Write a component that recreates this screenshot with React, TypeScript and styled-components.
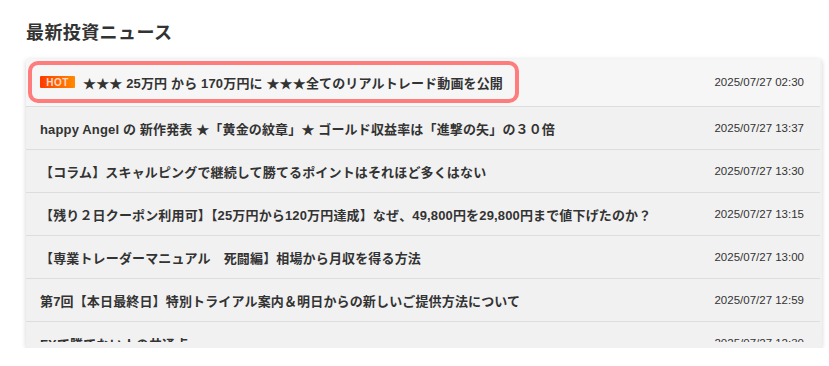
import React from "react";
import styled, { createGlobalStyle } from "styled-components";

const GlobalStyle = createGlobalStyle`
  html, body {
    margin: 0;
    padding: 0;
    background: #ffffff;
  }
  body {
    font-family: "Liberation Sans", "Noto Sans CJK JP", Arial, sans-serif;
    color: #333;
  }
  * { box-sizing: border-box; }
`;

const Page = styled.div`
  padding: 22px 8px 0 26px;
  width: 829px;
`;

const Heading = styled.h2`
  margin: 0 0 15px 0;
  font-size: 18px;
  line-height: 22px;
  font-weight: 700;
  color: #333;
  letter-spacing: 0.4px;
`;

const Panel = styled.div`
  width: 796px;
  padding: 0 2px 6px 0;
  background: #f1f1f1;
  border-radius: 4px;
  box-shadow: 0 1px 5px rgba(0, 0, 0, 0.18);
`;

const Scroll = styled.div`
  height: 283px;
  overflow: hidden;
`;

const List = styled.ul`
  list-style: none;
  margin: 0;
  padding: 0;
`;

const Row = styled.li<{ $hot?: boolean }>`
  display: flex;
  align-items: center;
  justify-content: space-between;
  padding: ${(p) => (p.$hot ? "6px 16px 7px 6px" : "4px 16px 4px 6px")};
  border-bottom: 1px solid #dddddd;
  background: ${(p) => (p.$hot ? "#f6f6f6" : "#f1f1f1")};
`;

const TitleLink = styled.a<{ $hot?: boolean }>`
  display: inline-flex;
  align-items: center;
  height: 34px;
  padding: 0 ${(p) => (p.$hot ? "12px" : "8px")} 0 8px;
  gap: 8px;
  color: #333;
  text-decoration: none;
  font-size: 13px;
  font-weight: 700;
  letter-spacing: 0.15px;
  border-radius: 6px;
  white-space: nowrap;
  box-shadow: ${(p) => (p.$hot ? "0 0 0 4px #ff7c7c" : "none")};
`;

const HotBadge = styled.span`
  display: inline-flex;
  align-items: center;
  justify-content: center;
  width: 35px;
  height: 12px;
  border-radius: 1px;
  background: linear-gradient(90deg, #ff3a00 0%, #ff8a00 100%);
  color: #ffd9c8;
  font-size: 10px;
  font-weight: 700;
  letter-spacing: 0.5px;
  font-family: "Liberation Sans", Arial, sans-serif;
`;

const DateText = styled.span`
  font-size: 11.5px;
  color: #333;
  white-space: nowrap;
  font-family: "Liberation Sans", Arial, sans-serif;
`;

type News = { title: string; date: string; hot?: boolean };

const items: News[] = [
  { title: "★★★ 25万円 から 170万円に ★★★全てのリアルトレード動画を公開", date: "2025/07/27 02:30", hot: true },
  { title: "happy Angel の 新作発表 ★「黄金の紋章」★ ゴールド収益率は「進撃の矢」の３０倍", date: "2025/07/27 13:37" },
  { title: "【コラム】スキャルピングで継続して勝てるポイントはそれほど多くはない", date: "2025/07/27 13:30" },
  { title: "【残り２日クーポン利用可】【25万円から120万円達成】なぜ、49,800円を29,800円まで値下げたのか？", date: "2025/07/27 13:15" },
  { title: "【専業トレーダーマニュアル　死闘編】相場から月収を得る方法", date: "2025/07/27 13:00" },
  { title: "第7回【本日最終日】特別トライアル案内＆明日からの新しいご提供方法について", date: "2025/07/27 12:59" },
  { title: "FXで勝てない人の共通点", date: "2025/07/27 12:30" },
];

export default function App() {
  return (
    <>
      <GlobalStyle />
      <Page>
        <Heading>最新投資ニュース</Heading>
        <Panel>
          <Scroll>
            <List>
              {items.map((n, i) => (
                <Row key={i} $hot={n.hot}>
                  <TitleLink href="#" $hot={n.hot}>
                    {n.hot && <HotBadge>HOT</HotBadge>}
                    <span>{n.title}</span>
                  </TitleLink>
                  <DateText>{n.date}</DateText>
                </Row>
              ))}
            </List>
          </Scroll>
        </Panel>
      </Page>
    </>
  );
}
